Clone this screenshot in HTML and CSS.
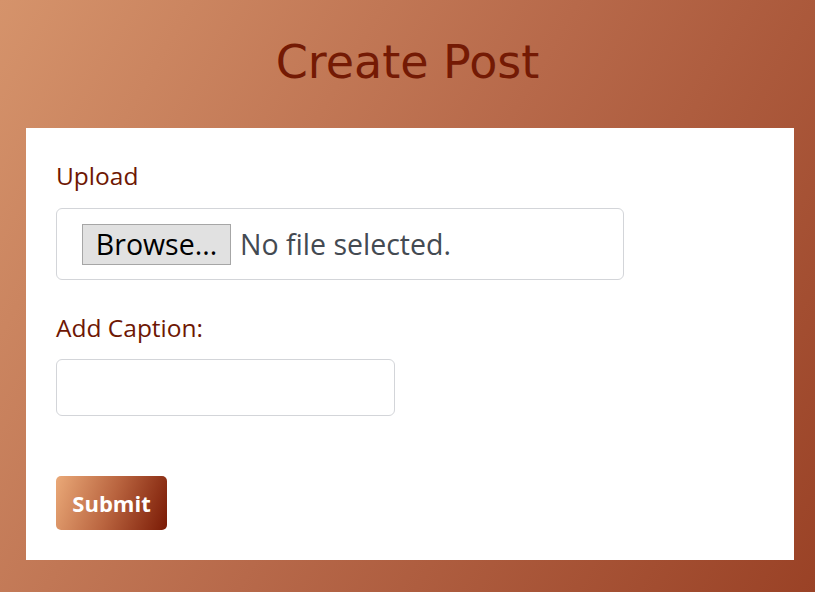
FILE: index.html
```html
<!DOCTYPE html>
<html>
<head>
<meta charset="utf-8">
<link rel="stylesheet" href="styles.css">
</head>
<body>
<header class="top"><h1 class="title">Create Post</h1></header>
<main class="card">
  <div class="label">Upload</div>
  <label class="filebox">
    <span class="browse">Browse...</span>
    <span class="nofile">No file selected.</span>
  </label>
  <div class="label label-caption">Add Caption:</div>
  <input class="caption" type="text">
  <button class="submit" type="button">Submit</button>
</main>
</body>
</html>
```
FILE: styles.css
```css
html, body {
  margin: 0;
  height: 100%;
}
body {
  background: linear-gradient(120deg, #d5936b 0%, #b7694a 50%, #9a4226 100%);
  font-family: "Open Sans", sans-serif;
  overflow: hidden;
}
.top {
  padding: 22px 0 26px;
}
.title {
  margin: 0;
  text-align: center;
  font-family: "DejaVu Sans", sans-serif;
  font-weight: normal;
  font-size: 46px;
  line-height: 80px;
  color: #741a04;
}
.card {
  background: #fff;
  margin: 0 21px 0 26px;
  padding: 30px 30px 30px;
  display: flex;
  flex-direction: column;
  align-items: flex-start;
}
.label {
  font-size: 24.5px;
  line-height: 36px;
  color: #6e1703;
}
.label-caption {
  margin-top: 30px;
}
.filebox {
  margin-top: 14px;
  box-sizing: border-box;
  width: 568px;
  height: 72px;
  border: 1px solid #d3d5d9;
  border-radius: 6px;
  display: flex;
  align-items: center;
  padding: 0 0 0 25px;
  font-family: "Open Sans", sans-serif;
  font-size: 28.5px;
}
.browse {
  box-sizing: border-box;
  height: 41px;
  width: 149px;
  background: #e1e1e1;
  border: 1px solid #a6a6a6;
  color: #000;
  display: flex;
  align-items: center;
  justify-content: center;
}
.nofile {
  margin-left: 9px;
  color: #444a52;
}
.caption {
  margin-top: 13px;
  box-sizing: border-box;
  width: 339px;
  height: 57px;
  border: 1px solid #d3d5d9;
  border-radius: 6px;
  outline: none;
}
.submit {
  margin-top: 60px;
  width: 111px;
  height: 54px;
  border: none;
  border-radius: 5px;
  background: linear-gradient(110deg, #eaa978 0%, #b9643f 50%, #7a1a05 100%);
  color: #fff;
  font-family: "Open Sans", sans-serif;
  font-weight: bold;
  font-size: 22px;
  padding: 0;
}
```
